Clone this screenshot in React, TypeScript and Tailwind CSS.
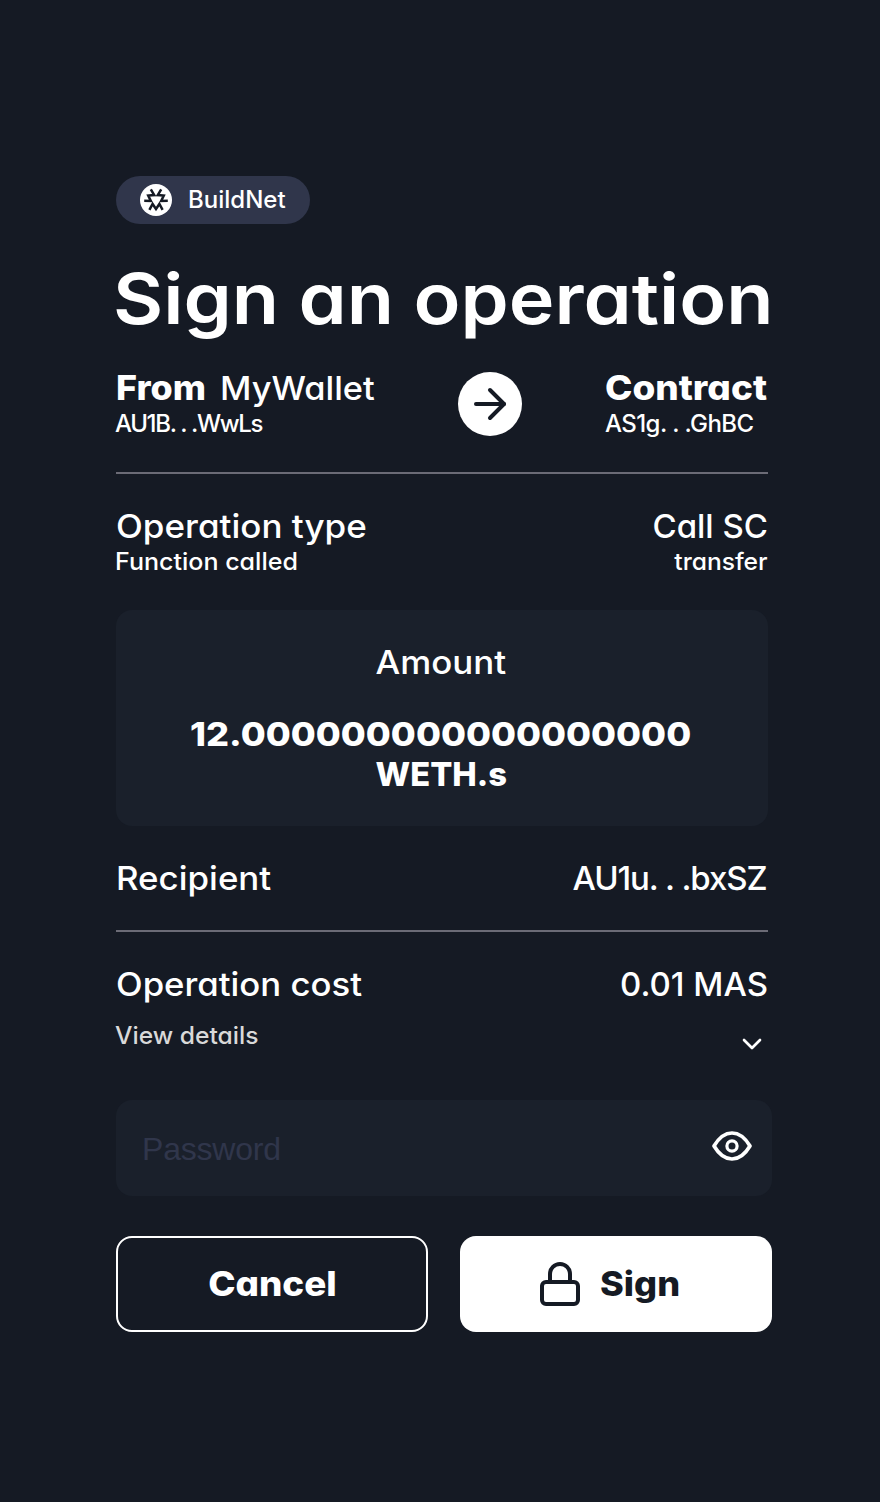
import { ArrowRight, ChevronDown, Lock } from 'lucide-react';

function NetworkMark() {
  const m = 'M-6.6 9.8L-3.4 4L0 9L3.4 4L6.6 9.8';
  return (
    <svg viewBox="-16 -16 32 32" className="size-8">
      <circle r="16" fill="#fff" />
      <g fill="none" stroke="#151a24" strokeWidth="2.5">
        <path d={m} />
        <path d={m} transform="rotate(120)" />
        <path d={m} transform="rotate(240)" />
      </g>
    </svg>
  );
}

function Eye() {
  return (
    <svg viewBox="0 0 24 24" className="size-12" fill="none" stroke="#fff" strokeWidth="1.85" strokeLinejoin="round">
      <path d="M3 12C5.4 8 8.2 5.5 12 5.5S18.6 8 21 12C18.6 16 15.8 18.5 12 18.5S5.4 16 3 12Z" />
      <circle cx="12" cy="12" r="2.55" strokeWidth="1.6" />
    </svg>
  );
}

export default function App() {
  return (
    <div className="h-[1502px] w-[880px] bg-[#151a24] pl-[116px] pt-44 font-[Inter,sans-serif] text-white [font-feature-settings:'cv11']">
      <div className="flex h-12 w-[194px] items-center gap-4 rounded-full bg-[#30364b] pl-6">
        <NetworkMark />
        <span className="text-2xl/8 font-medium">BuildNet</span>
      </div>

      <h1 className="mt-[35px] -ml-[3px] w-fit origin-left scale-x-[1.104] whitespace-nowrap text-[70px]/[80px] font-semibold">
        Sign an operation
      </h1>

      <div className="mt-[29px] flex w-[652px]">
        <div className="w-[342px]">
          <div className="flex whitespace-nowrap">
            <span className="w-[104px]">
              <span className="inline-block origin-left scale-x-[1.055] text-[34px]/10 font-extrabold">From</span>
            </span>
            <span className="origin-left scale-x-[1.043] text-[33px]/10 font-medium">MyWallet</span>
          </div>
          <p className="-ml-px whitespace-nowrap text-2xl/8 font-medium tracking-[-1.35px]">AU1B. . .WwLs</p>
        </div>
        <div className="mt-1 flex size-16 items-center justify-center rounded-full bg-white">
          <ArrowRight size={48} color="#151a24" />
        </div>
        <div className="ml-[83px] whitespace-nowrap">
          <p className="w-fit origin-left scale-x-[1.086] text-[34px]/10 font-extrabold">Contract</p>
          <p className="text-2xl/8 font-medium tracking-[-0.58px]">AS1g. . .GhBC</p>
        </div>
      </div>

      <hr className="mt-8 h-0.5 w-[652px] border-0 bg-[#6b6b76]" />

      <div className="mt-8 flex w-[652px] justify-between">
        <div>
          <p className="w-fit origin-left scale-x-[1.061] text-[33px]/10 font-medium">Operation type</p>
          <p className="-ml-px w-fit origin-left scale-x-[1.043] text-2xl/8 font-medium">Function called</p>
        </div>
        <div className="text-right">
          <p className="text-[33px]/10 font-medium">Call SC</p>
          <p className="origin-right scale-x-[1.025] text-2xl/8 font-medium">transfer</p>
        </div>
      </div>

      <div className="mt-8 flex w-[652px] flex-col items-center rounded-2xl bg-[#1a202b] py-8 pr-0.5 text-[33px]/10">
        <p className="scale-x-[1.058] font-medium">Amount</p>
        <p className="mt-8 scale-x-[1.096] font-extrabold">12.000000000000000000</p>
        <p className="scale-x-[0.991] font-extrabold">WETH.s</p>
      </div>

      <div className="mt-8 flex w-[652px] justify-between text-[33px]/10 font-medium">
        <span className="origin-left scale-x-[1.057]">Recipient</span>
        <span className="mr-[1.5px] tracking-[-1.09px]">AU1u. . .bxSZ</span>
      </div>

      <hr className="mt-8 h-0.5 w-[652px] border-0 bg-[#6b6b76]" />

      <div className="mt-8 flex w-[652px] justify-between text-[33px]/10 font-medium">
        <span className="origin-left scale-x-[1.053]">Operation cost</span>
        <span>0.01 MAS</span>
      </div>
      <div className="mt-4 flex h-10 w-[652px] justify-between">
        <span className="-ml-px origin-left scale-x-[1.026] text-2xl/8 font-medium text-[#d9d9d9]">View details</span>
        <ChevronDown size={32} className="mt-2" />
      </div>

      <div className="mt-10 flex h-24 w-[656px] items-center justify-between rounded-2xl bg-[#1a202b] pl-[26px] pr-4">
        <input
          type="password"
          placeholder="Password"
          className="w-[400px] bg-transparent pt-0.5 font-['Liberation_Sans',sans-serif] text-[32px]/10 tracking-[-0.2px] text-white outline-none placeholder:text-[#30364b]"
        />
        <div className="-mt-1">
          <Eye />
        </div>
      </div>

      <div className="mt-10 flex w-[656px] gap-8 text-[34px]/10 font-extrabold">
        <button className="h-24 w-[312px] rounded-2xl border-2 border-white">
          <span className="inline-block scale-x-[1.082]">Cancel</span>
        </button>
        <button className="flex h-24 w-[312px] items-center gap-4 rounded-2xl bg-white pl-[76px] text-[#151a24]">
          <Lock size={48} />
          <span className="origin-left scale-x-[1.062]">Sign</span>
        </button>
      </div>
    </div>
  );
}
